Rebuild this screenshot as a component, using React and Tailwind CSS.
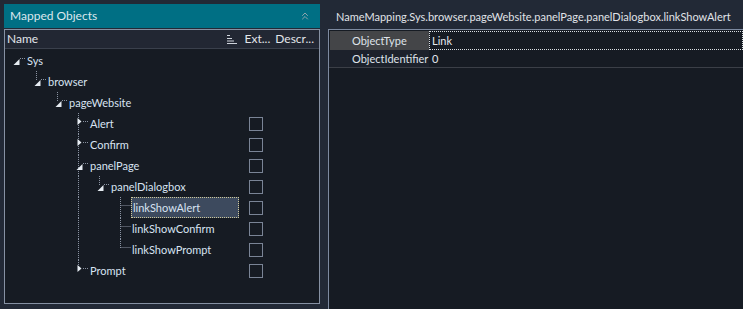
import React from "react";
import { ChevronsUp } from "lucide-react";

const LINE = "#8a93a2";

const rows = [
  { name: "Sys", level: 0, kind: "open", last: true, box: false },
  { name: "browser", level: 1, kind: "open", last: true, box: false },
  { name: "pageWebsite", level: 2, kind: "open", last: true, box: false },
  { name: "Alert", level: 3, kind: "closed", last: false, box: true },
  { name: "Confirm", level: 3, kind: "closed", last: false, box: true },
  { name: "panelPage", level: 3, kind: "open", last: false, box: true },
  { name: "panelDialogbox", level: 4, kind: "open", last: true, box: true, pass: [3] },
  { name: "linkShowAlert", level: 5, kind: "leaf", last: false, box: true, pass: [3], selected: true },
  { name: "linkShowConfirm", level: 5, kind: "leaf", last: false, box: true, pass: [3] },
  { name: "linkShowPrompt", level: 5, kind: "leaf", last: true, box: true, pass: [3] },
  { name: "Prompt", level: 3, kind: "closed", last: true, box: true },
];

// x of the guide line for a level, in tree coordinates (tree starts at page x=5)
const gx = (l) => 10.5 + 21 * l;

function Guides({ row }) {
  const L = row.level;
  const w = 22 + 21 * L;
  const x = gx(L);
  const parts = [];
  (row.pass || []).forEach((k) => {
    parts.push(<line key={"p" + k} x1={gx(k)} y1={0} x2={gx(k)} y2={21} />);
  });
  if (L > 0) {
    parts.push(<line key="v" x1={x} y1={0} x2={x} y2={row.last ? 9 : 21} />);
  }
  if (row.kind === "open") {
    parts.push(<line key="c" x1={gx(L + 1)} y1={17} x2={gx(L + 1)} y2={21} />);
  }
  const hx = row.kind === "leaf" ? x + 1 : x + 4.5;
  parts.push(<line key="h" x1={hx} y1={8.5} x2={w - 1} y2={8.5} />);
  return (
    <svg width={w} height={21} className="shrink-0">
      <g stroke={LINE} strokeWidth="1" strokeDasharray="1 1">{parts}</g>
      {row.kind === "open" && <polygon points={`${x + 4},${9} ${x + 4},${15} ${x - 2},${15}`} fill="#e6ecf2" />}
      {row.kind === "closed" && <polygon points={`${x - 1},${5} ${x + 3},${8.5} ${x - 1},${12}`} fill="#e6ecf2" />}
    </svg>
  );
}

function SortIcon() {
  return (
    <svg width="10" height="9" viewBox="0 0 10 9" className="shrink-0">
      <g stroke="#cfd4dc" strokeWidth="1">
        <line x1="0" y1="0.5" x2="3" y2="0.5" />
        <line x1="0" y1="3.5" x2="5" y2="3.5" />
        <line x1="0" y1="6" x2="7" y2="6" />
        <line x1="0" y1="8.5" x2="10" y2="8.5" />
      </g>
    </svg>
  );
}

export default function App() {
  return (
    <div
      className="w-[743px] h-[309px] overflow-hidden bg-[#222936] flex text-[11px] leading-none text-[#d8e3f2]"
      style={{ fontFamily: 'Lato, "Liberation Sans", Arial, sans-serif' }}
    >
      {/* left panel */}
      <div className="ml-[4px] mt-[4px] w-[316px] h-[300px] flex flex-col shrink-0">
        <div className="h-[24px] bg-[#006f84] flex items-center justify-between pl-[6px] pr-[9px] text-[12px] text-[#dce7ee]">
          <span>Mapped Objects</span>
          <ChevronsUp size={12} strokeWidth={2} color="#8fa4ad" />
        </div>
        <div className="mt-[1px] flex-1 border border-[#8691a3] bg-[#161b23] flex flex-col">
          <div className="h-[19px] bg-[#222733] border-b border-[#3a404c] flex items-center text-[12px] text-[#e2e5ea]">
            <span className="pl-[2px]">Name</span>
            <div className="ml-auto flex items-center">
              <SortIcon />
              <span className="ml-[8px]">Ext...</span>
              <span className="ml-[5px] mr-[5px]">Descr...</span>
            </div>
          </div>
          <div className="pt-[1px]">
            {rows.map((r) => (
              <div key={r.name} className="h-[21px] flex items-center">
                <div className="flex items-center w-[244px]">
                  <Guides row={r} />
                  <span
                    className={
                      r.selected
                        ? "h-[21px] w-[108px] -ml-[1px] pl-[1px] flex items-center bg-[#3d4a5e] border border-dotted border-[#cfc89a]"
                        : "h-[21px] flex items-center"
                    }
                  >
                    {r.name}
                  </span>
                </div>
                {r.box && <div className="w-[14px] h-[14px] border border-[#7a8496]" />}
              </div>
            ))}
          </div>
        </div>
      </div>

      {/* right panel */}
      <div className="ml-[8px] flex-1 flex flex-col">
        <div className="h-[29px] flex items-center pl-[8px] pt-[3px] text-[#e0e3e8]">
          NameMapping.Sys.browser.pageWebsite.panelPage.panelDialogbox.linkShowAlert
        </div>
        <div className="flex-1 border-l border-t border-[#7d8aa0] bg-[#161b23] flex flex-col">
          <div className="h-[19px] mt-[1px] flex">
            <div className="w-[99px] ml-[1px] bg-[#444548] flex items-center pl-[22px] text-[#dfe3ea]">ObjectType</div>
            <div className="flex-1 border border-dotted border-[#d9dde2] flex items-center pl-[2px] text-[#e4e8ee]">Link</div>
          </div>
          <div className="h-[18px] flex border-b border-[#3b3f47]">
            <div className="w-[100px] bg-[#1c212b] flex items-center pl-[23px] text-[#dfe3ea]">ObjectIdentifier</div>
            <div className="flex-1 flex items-center pl-[3px] text-[#e4e8ee]">0</div>
          </div>
        </div>
      </div>
    </div>
  );
}
